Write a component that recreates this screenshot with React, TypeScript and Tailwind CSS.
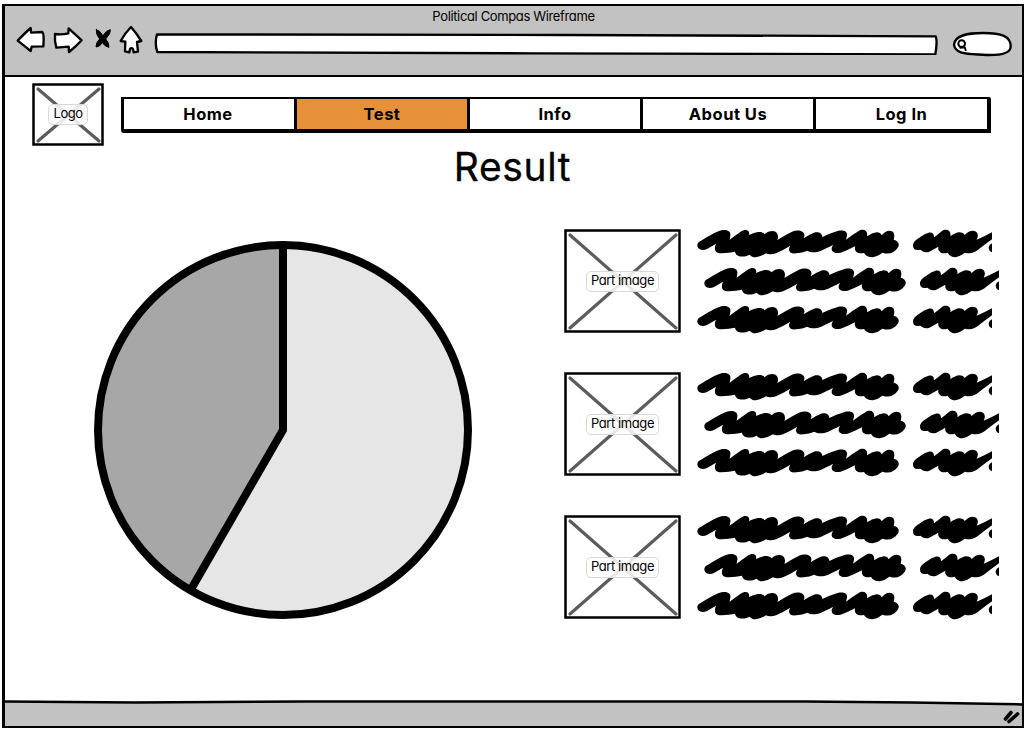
import type { ReactNode } from "react";

const INK = "#000";

function SketchIcon({ box, className, children }: { box: string; className: string; children: ReactNode }) {
  return (
    <svg
      viewBox={box}
      className={`shrink-0 ${className}`}
      fill="#fff"
      stroke={INK}
      strokeWidth={7}
      strokeLinecap="round"
      strokeLinejoin="round"
    >
      {children}
    </svg>
  );
}

function Toolbar() {
  return (
    <div className="flex h-[30px] items-start pl-[10px]">
      <SketchIcon box="45 75 93 90" className="h-[30px] w-[31px]">
        <path d="M53 122 Q76 98 92 84 L93 98 L126 96 Q131 97 131 120 L130 139 L95 140 L92 153 Q76 140 53 122Z" />
      </SketchIcon>
      <SketchIcon box="156 75 96 90" className="ml-[6px] h-[30px] w-[32px]">
        <path d="M165 102 Q186 105 205 100 L206 85 Q222 100 245 121 Q230 138 207 156 L206 140 Q188 141 169 143 Q163 122 165 102Z" />
      </SketchIcon>
      <SketchIcon box="279 75 60 90" className="ml-[9px] h-[30px] w-[20px]">
        <path strokeWidth={3} fill={INK} d="M289 89 Q299 90 309 107 Q319 90 331 89 Q333 100 317 117 Q328 129 327 142 Q316 141 307 128 Q298 142 288 141 Q287 129 299 117 Q287 103 289 89Z" />
      </SketchIcon>
      <SketchIcon box="354 75 78 90" className="ml-[5px] h-[30px] w-[26px]">
        <path d="M393 81 Q408 98 424 123 L411 126 L414 155 L401 157 L399 147 Q394 142 390 147 L388 157 L375 154 L376 125 L362 123 Q376 98 393 81Z" />
      </SketchIcon>
      <SketchIcon box="462 75 2355 90" className="ml-[10px] h-[30px] w-[785px]">
        <path d="M471 103 L1700 105 L2807 109 Q2813 122 2806 163 L1600 160 L472 156 Q463 130 471 103Z" />
      </SketchIcon>
      <SketchIcon box="2853 75 186 99" className="ml-[12px] h-[33px] w-[62px]">
        <path d="M2862 134 C2864 106 2900 99 2950 99 C3004 99 3033 108 3032 140 C3031 161 3002 166 2960 165 C2910 161 2866 166 2862 134Z" />
        <circle cx={2885} cy={131} r={10} strokeWidth={6} />
        <path d="M2881 143 L2894 142 L2897 150" strokeWidth={6} fill="none" />
      </SketchIcon>
    </div>
  );
}

function ImageBox({ label, className, labelClass }: { label: string; className: string; labelClass: string }) {
  return (
    <div className={`relative flex shrink-0 items-center justify-center bg-white ${className}`}>
      <svg className="absolute inset-0 size-full" fill="none" stroke={INK} strokeWidth={2.5}>
        <rect x="1.5" y="1.5" className="h-[calc(100%-3px)] w-[calc(100%-3px)]" />
      </svg>
      <svg
        className="absolute inset-[5.5px] h-[calc(100%-11px)] w-[calc(100%-11px)] overflow-visible"
        stroke="#5c5c5c"
        strokeWidth={3.2}
        strokeLinecap="round"
      >
        <line x1="0" y1="0" x2="100%" y2="100%" />
        <line x1="100%" y1="0" x2="0" y2="100%" />
      </svg>
      <span
        className={`relative flex h-[21px] items-center justify-center rounded-[5px] border border-[#d8d8d8] bg-white/85 pb-[2px] text-[13px] leading-none whitespace-nowrap ${labelClass}`}
      >
        {label}
      </span>
    </div>
  );
}

const tabs = [
  { name: "Home", cell: "w-[173px] border-r-[3px] bg-white pr-[2px]" },
  { name: "Test", cell: "w-[173px] border-r-[3px] bg-[#e69138]" },
  { name: "Info", cell: "w-[173px] border-r-[3px] bg-white" },
  { name: "About Us", cell: "w-[173px] border-r-[3px] bg-white" },
  { name: "Log In", cell: "w-[171px] bg-white" },
];

function Nav() {
  return (
    <nav className="mt-[14px] ml-[17px] flex h-[36px] w-[870px] rounded-tr-[2px] rounded-bl-[3px] border-t-2 border-r-[4px] border-b-[4px] border-l-[3px] border-black">
      {tabs.map((t) => (
        <a
          key={t.name}
          className={`flex h-full shrink-0 items-center justify-center border-black text-[16.5px] leading-none font-bold tracking-[0.5px] ${t.cell}`}
        >
          {t.name}
        </a>
      ))}
    </nav>
  );
}

function PieChart() {
  return (
    <svg viewBox="0 0 380 380" className="mt-[11px] ml-[88px] size-[380px] shrink-0">
      <circle cx={190} cy={190} r={185} fill="#e6e6e6" />
      <path d="M190 190 V5 A185 185 0 0 0 97.5 350.2 Z" fill="#a7a7a7" />
      <path d="M190 5 V190 L97.5 350.2" fill="none" stroke={INK} strokeWidth={8} />
      <circle cx={190} cy={190} r={185} fill="none" stroke={INK} strokeWidth={8} />
    </svg>
  );
}

function ScribbleLine({ className }: { className: string }) {
  return (
    <svg viewBox="21 26 885 114" className={`h-[38px] w-[295px] shrink-0 ${className}`} fill={INK}>
      <path d="M38 89 C20 89 16 68 32 62 Q62 43 85 33 C104 25 124 30 121 46 L119 58 Q136 45 152 34 C166 25 181 29 177 44 Q193 36 204 35 C215 34 221 37 224 42 Q234 32 248 32 C263 33 267 47 262 59 Q287 43 306 34 C326 26 346 33 343 48 L341 54 Q356 43 372 37 C386 33 397 39 397 50 Q418 39 436 34 C456 26 474 31 471 46 L468 58 Q488 43 505 33 C519 23 535 31 531 48 Q546 38 560 36 Q572 36 575 45 Q585 31 599 31 C614 32 615 45 611 58 C627 62 630 75 622 84 C612 97 598 104 577 97 Q566 107 548 111 Q530 111 522 98 C504 102 492 95 495 78 Q473 90 452 97 C428 103 418 88 430 73 Q406 85 392 92 C377 98 362 97 352 91 Q337 98 320 99 C298 102 292 89 301 76 Q278 90 258 99 C245 104 235 102 228 99 Q212 109 197 111 Q183 110 179 103 C161 112 138 111 135 94 Q118 97 95 99 C72 99 72 83 78 70 Q61 80 51 86 Q45 89 38 89Z" />
      <path d="M669 76 C669 64 680 57 691 50 Q704 40 716 37 C728 35 732 41 732 51 Q744 43 755 33 C769 23 785 31 781 48 Q796 37 808 36 Q820 36 824 44 Q836 31 849 31 C864 32 867 45 860 58 Q881 50 906 36 V57 Q888 70 870 84 C854 97 842 102 825 97 Q812 107 797 111 Q781 111 773 97 C756 103 742 95 745 79 Q731 87 718 94 C706 99 696 92 691 88 C677 91 669 86 669 76Z M906 69 Q898 72 896 80 Q896 93 906 96Z" />
    </svg>
  );
}

function ResultRow() {
  return (
    <div className="flex h-[104px]">
      <ImageBox label="Part image" className="h-[104px] w-[117px]" labelClass="w-[73px] tracking-[-0.4px]" />
      <div className="ml-4 flex flex-col">
        <ScribbleLine className="" />
        <ScribbleLine className="ml-[7px]" />
        <ScribbleLine className="" />
      </div>
    </div>
  );
}

export default function App() {
  return (
    <div className="h-[731px] w-[1026px] overflow-hidden bg-white pt-1 pl-0.5 text-black [font-family:Inter,'Open_Sans',sans-serif] [font-feature-settings:'cv11']">
      <div className="flex h-[724px] w-[1022px] flex-col overflow-hidden border-2 border-l-[3px] border-black">
        <header className="h-[71px] shrink-0 border-b-2 border-black bg-[#c2c2c2]">
          <div className="flex h-[19px] items-center justify-center pt-[2px] text-[13px] leading-none tracking-[-0.36px]">
            Political Compas Wireframe
          </div>
          <Toolbar />
        </header>

        <main className="flex min-h-0 flex-1 flex-col">
          <div className="flex pt-[6px] pl-[27px]">
            <ImageBox label="Logo" className="h-[63px] w-[72px]" labelClass="w-[40px] tracking-[-0.5px]" />
            <Nav />
          </div>
          <h1 className="flex h-[40px] items-center justify-center pr-[2px] text-[39px] leading-none tracking-[0.6px] [-webkit-text-stroke:0.3px_#000]">
            Result
          </h1>
          <div className="mt-[43px] flex">
            <PieChart />
            <div className="ml-[91px] flex flex-col gap-[39px]">
              <ResultRow />
              <ResultRow />
              <ResultRow />
            </div>
          </div>
        </main>

        <footer className="h-[26px] shrink-0">
          <svg viewBox="0 0 1017 26" className="h-[26px] w-[1017px]" fill="none" stroke={INK} strokeLinecap="round">
            <path d="M-3 1.5 L130 2.5 L300 1.5 L800 1.5 Q910 2 1020 4.5 V30 H-3Z" fill="#c2c2c2" strokeWidth={2.5} />
            <path d="M1000.5 19 L1006 12.5 M1004 21.5 L1012.5 14" strokeWidth={3.6} />
          </svg>
        </footer>
      </div>
    </div>
  );
}
